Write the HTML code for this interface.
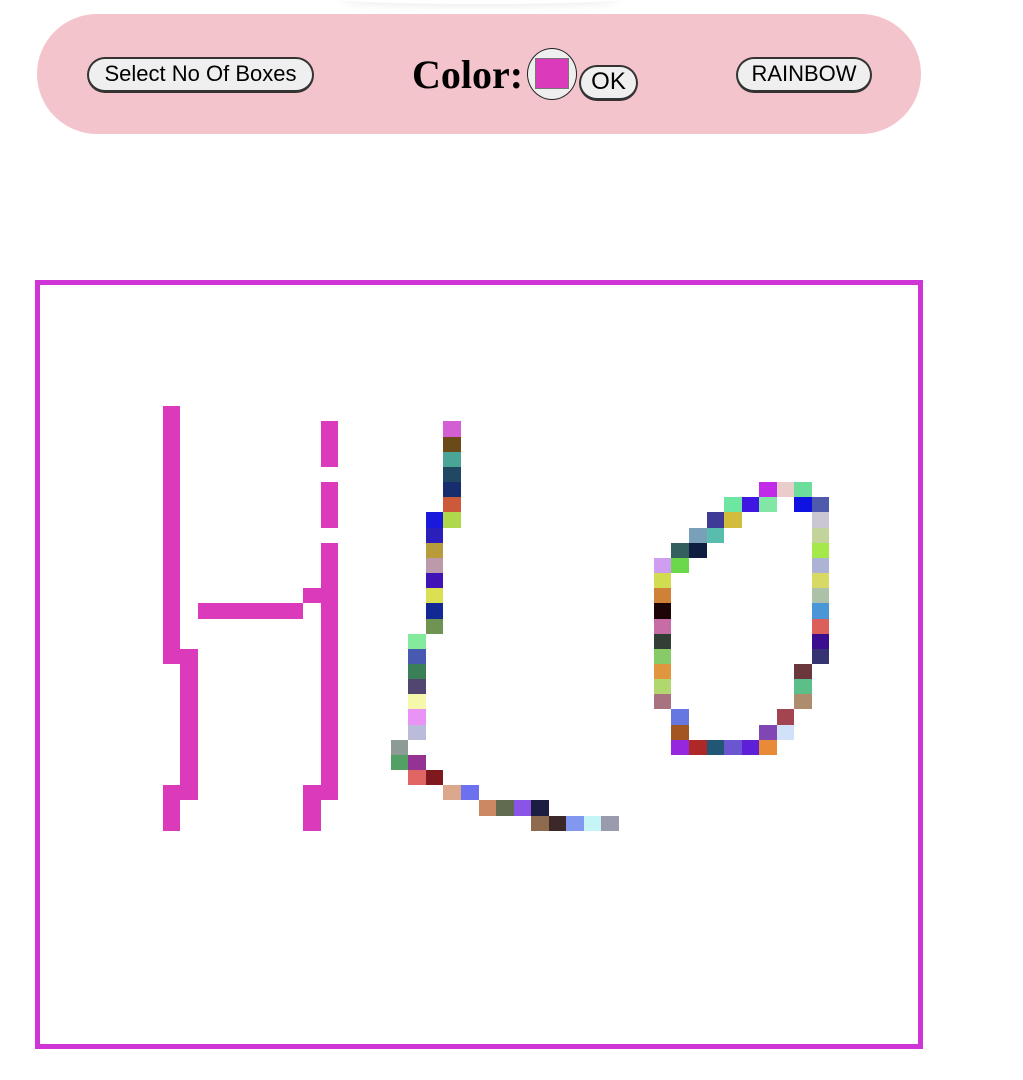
<!DOCTYPE html>
<html><head><meta charset="utf-8"><style>
html,body{margin:0;padding:0;background:#fff;width:1023px;height:1080px;overflow:hidden;position:relative;font-family:"Liberation Sans",Arial,sans-serif}
.bar{position:absolute;left:37px;top:14px;width:884px;height:120px;background:#f4c4cc;border-radius:60px}
.shadow{position:absolute;left:340px;top:-6px;width:280px;height:10px;border-radius:50%;box-shadow:0 2px 8px rgba(0,0,0,0.08);background:#fff}
.btn{position:absolute;box-sizing:border-box;border:2px solid #333;border-bottom-width:3px;border-radius:18px;background:#efefef;font-size:22px;color:#000;text-align:center;line-height:30px;white-space:nowrap}
.lbl{position:absolute;left:412px;top:50px;font-family:"Liberation Serif",serif;font-weight:bold;font-size:40px;line-height:50px}
.circ{position:absolute;left:527px;top:48px;width:50px;height:52px;box-sizing:border-box;border:1px solid #222;border-radius:50%;background:#efefef}
.sw{position:absolute;left:535px;top:58px;width:34px;height:31px;box-sizing:border-box;border:1px solid #777;background:#db3bbb}
.frame{position:absolute;left:35px;top:280px;width:888px;height:769px;box-sizing:border-box;border:5px solid #cf34d6}
.g{position:absolute;left:40px;top:285px;width:877px;height:758px;display:grid;grid-template-columns:repeat(50,1fr);grid-template-rows:repeat(50,1fr)}
.p{background:#db3bbb}
</style></head><body>
<div class="shadow"></div>
<div class="bar"></div>
<div class="btn" style="left:87px;top:57px;width:227px;height:36px">Select No Of Boxes</div>
<div class="lbl">Color:</div>
<div class="circ"></div><div class="sw"></div>
<div class="btn" style="left:579px;top:65px;width:59px;height:36px;font-size:24px">OK</div>
<div class="btn" style="left:736px;top:57px;width:136px;height:36px">RAINBOW</div>
<div class="frame"></div>
<div class="g">
<div class="p" style="grid-area:9/8/26/9"></div>
<div class="p" style="grid-area:25/9/35/10"></div>
<div class="p" style="grid-area:34/8/37/9"></div>
<div class="p" style="grid-area:22/10/23/16"></div>
<div class="p" style="grid-area:10/17/13/18"></div>
<div class="p" style="grid-area:14/17/17/18"></div>
<div class="p" style="grid-area:18/17/35/18"></div>
<div class="p" style="grid-area:21/16/22/17"></div>
<div class="p" style="grid-area:34/16/37/17"></div>

<div style="grid-area:10/24;background:#d45ed4"></div>
<div style="grid-area:11/24;background:#6a4a18"></div>
<div style="grid-area:12/24;background:#4aa597"></div>
<div style="grid-area:13/24;background:#214862"></div>
<div style="grid-area:14/24;background:#172d6e"></div>
<div style="grid-area:15/24;background:#cc5a3a"></div>
<div style="grid-area:16/24;background:#afd84a"></div>
<div style="grid-area:16/23;background:#1919dc"></div>
<div style="grid-area:17/23;background:#2b1fbc"></div>
<div style="grid-area:18/23;background:#b89c3c"></div>
<div style="grid-area:19/23;background:#bc9aa9"></div>
<div style="grid-area:20/23;background:#3f13b5"></div>
<div style="grid-area:21/23;background:#dbe052"></div>
<div style="grid-area:22/23;background:#122995"></div>
<div style="grid-area:23/23;background:#6e9352"></div>
<div style="grid-area:24/22;background:#85eb9c"></div>
<div style="grid-area:25/22;background:#475aaf"></div>
<div style="grid-area:26/22;background:#3a7f57"></div>
<div style="grid-area:27/22;background:#50466f"></div>
<div style="grid-area:28/22;background:#f5f7aa"></div>
<div style="grid-area:29/22;background:#ea93f7"></div>
<div style="grid-area:30/22;background:#bbbbdb"></div>
<div style="grid-area:31/21;background:#8c9b94"></div>
<div style="grid-area:32/21;background:#52a064"></div>
<div style="grid-area:32/22;background:#953394"></div>
<div style="grid-area:33/22;background:#e06563"></div>
<div style="grid-area:33/23;background:#7f191d"></div>
<div style="grid-area:34/24;background:#dba88d"></div>
<div style="grid-area:34/25;background:#6d71f0"></div>
<div style="grid-area:35/26;background:#cc8863"></div>
<div style="grid-area:35/27;background:#616b4f"></div>
<div style="grid-area:35/28;background:#8b54e8"></div>
<div style="grid-area:35/29;background:#1b1e40"></div>
<div style="grid-area:36/29;background:#8e6a4f"></div>
<div style="grid-area:36/30;background:#3c2829"></div>
<div style="grid-area:36/31;background:#8297f0"></div>
<div style="grid-area:36/32;background:#c5f5f6"></div>
<div style="grid-area:36/33;background:#9b9bb0"></div>

<div style="grid-area:14/42;background:#c02ae8"></div>
<div style="grid-area:14/43;background:#eacccb"></div>
<div style="grid-area:14/44;background:#6ddd9b"></div>
<div style="grid-area:15/40;background:#6ce6a0"></div>
<div style="grid-area:15/41;background:#4016e3"></div>
<div style="grid-area:15/42;background:#82e6a5"></div>
<div style="grid-area:15/44;background:#0f12e0"></div>
<div style="grid-area:15/45;background:#4f5aad"></div>
<div style="grid-area:16/39;background:#3e3a97"></div>
<div style="grid-area:16/40;background:#d1bc3c"></div>
<div style="grid-area:16/45;background:#cbc6d3"></div>
<div style="grid-area:17/38;background:#78a0b8"></div>
<div style="grid-area:17/39;background:#58bdad"></div>
<div style="grid-area:17/45;background:#c2d49c"></div>
<div style="grid-area:18/37;background:#335f5f"></div>
<div style="grid-area:18/38;background:#0e1d40"></div>
<div style="grid-area:18/45;background:#a5e84a"></div>
<div style="grid-area:19/36;background:#d09ef0"></div>
<div style="grid-area:19/37;background:#6bd84b"></div>
<div style="grid-area:19/45;background:#acb3d4"></div>
<div style="grid-area:20/36;background:#d1dc50"></div>
<div style="grid-area:20/45;background:#d8d864"></div>
<div style="grid-area:21/36;background:#d08138"></div>
<div style="grid-area:21/45;background:#adc1a8"></div>
<div style="grid-area:22/36;background:#1e0505"></div>
<div style="grid-area:22/45;background:#4a96d6"></div>
<div style="grid-area:23/36;background:#c86ca5"></div>
<div style="grid-area:23/45;background:#dd5f5b"></div>
<div style="grid-area:24/36;background:#323d33"></div>
<div style="grid-area:24/45;background:#3a0e8f"></div>
<div style="grid-area:25/36;background:#86cb68"></div>
<div style="grid-area:25/45;background:#353371"></div>
<div style="grid-area:26/36;background:#df963f"></div>
<div style="grid-area:26/44;background:#6a383c"></div>
<div style="grid-area:27/36;background:#b1d86e"></div>
<div style="grid-area:27/44;background:#5cbf8a"></div>
<div style="grid-area:28/36;background:#a8727f"></div>
<div style="grid-area:28/44;background:#ad8d6d"></div>
<div style="grid-area:29/37;background:#6677e2"></div>
<div style="grid-area:29/43;background:#a34451"></div>
<div style="grid-area:30/37;background:#a35522"></div>
<div style="grid-area:30/42;background:#8046b4"></div>
<div style="grid-area:30/43;background:#d0e1f9"></div>
<div style="grid-area:31/37;background:#9528de"></div>
<div style="grid-area:31/38;background:#ae2828"></div>
<div style="grid-area:31/39;background:#225675"></div>
<div style="grid-area:31/40;background:#6c55d0"></div>
<div style="grid-area:31/41;background:#5d20d8"></div>
<div style="grid-area:31/42;background:#e88a38"></div>
</div>
</body></html>
